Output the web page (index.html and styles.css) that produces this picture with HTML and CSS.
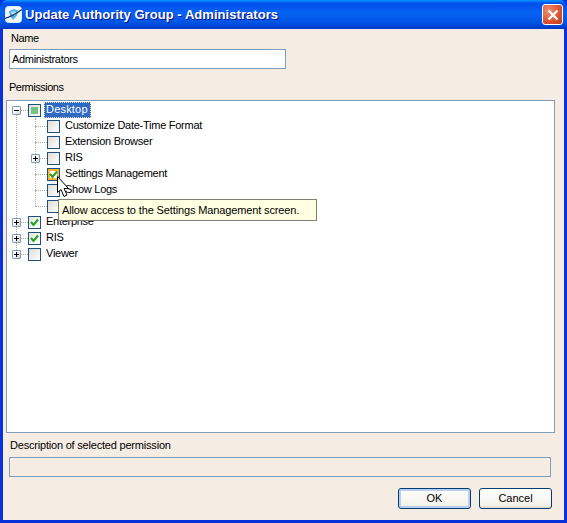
FILE: index.html
```html
<!DOCTYPE html>
<html lang="en">
<head>
    <meta charset="UTF-8">
    <title>Update Authority Group - Administrators</title>
    <link rel="stylesheet" href="styles.css">
</head>
<body>
    <div class="window">
        <div class="titlebar">
            <svg class="app-icon" width="17" height="17" viewBox="0 0 17 17">
                <rect x="0.5" y="0.5" width="16" height="16" rx="3" fill="#f4f8fc" stroke="#dfeaf6"/>
                <path d="M4 5l5-2 4 1.500-1 5-4 4.500-3-4z" fill="#4fb2ea"/>
                <path d="M6 6l3-1 2 1-1 3-2 1z" fill="#a6daf6"/>
                <path d="M0 12.500C5 11 11 8 17 3.500" fill="none" stroke="#1c3c5c" stroke-width="1.300"/>
            </svg>
            <span class="title-text">Update Authority Group - Administrators</span>
            <div class="close-btn">
                <svg width="12" height="12" viewBox="0 0 12 12">
                    <path d="M1.500 1.500l9 9M10.500 1.500l-9 9" stroke="#fff" stroke-width="2.400"/>
                </svg>
            </div>
        </div>

        <div class="client">
            <label class="name-label">Name</label>
            <input class="name-input" type="text" value="Administrators">

            <label class="perm-label">Permissions</label>
            <div class="tree">
                <ul class="tree-list top">
                    <li>
                        <div class="tree-row">
                            <span class="expander minus"></span>
                            <span class="check mixed"></span>
                            <span class="tree-label selected">Desktop</span>
                        </div>
                        <ul class="tree-list">
                            <li><div class="tree-row"><span class="expander none"></span><span class="check"></span><span class="tree-label">Customize Date-Time Format</span></div></li>
                            <li><div class="tree-row"><span class="expander none"></span><span class="check"></span><span class="tree-label">Extension Browser</span></div></li>
                            <li><div class="tree-row"><span class="expander plus"></span><span class="check"></span><span class="tree-label">RIS</span></div></li>
                            <li><div class="tree-row"><span class="expander none"></span><span class="check checked hot"><svg width="11" height="11" viewBox="0 0 11 11"><path d="M2 5l2.500 3L9 2.500" class="tick"/></svg></span><span class="tree-label">Settings Management</span></div></li>
                            <li><div class="tree-row"><span class="expander none"></span><span class="check"></span><span class="tree-label">Show Logs</span></div></li>
                            <li><div class="tree-row"><span class="expander none"></span><span class="check"></span><span class="tree-label"></span></div></li>
                        </ul>
                    </li>
                    <li><div class="tree-row"><span class="expander plus"></span><span class="check checked"><svg width="11" height="11" viewBox="0 0 11 11"><path d="M2 5l2.500 3L9 2.500" class="tick"/></svg></span><span class="tree-label">Enterprise</span></div></li>
                    <li><div class="tree-row"><span class="expander plus"></span><span class="check checked"><svg width="11" height="11" viewBox="0 0 11 11"><path d="M2 5l2.500 3L9 2.500" class="tick"/></svg></span><span class="tree-label">RIS</span></div></li>
                    <li><div class="tree-row"><span class="expander plus"></span><span class="check"></span><span class="tree-label">Viewer</span></div></li>
                </ul>
            </div>

            <label class="desc-label">Description of selected permission</label>
            <div class="desc-box"></div>

            <div class="buttons">
                <button class="btn default">OK</button>
                <button class="btn">Cancel</button>
            </div>
        </div>

        <div class="tooltip">Allow access to the Settings Management screen.</div>
        <svg class="cursor" width="16" height="24" viewBox="0 0 16 24">
            <path d="M1.500 1.500v16l3.500-3 3 7 3-1.500-3-6.500h4.500z" fill="#fff" stroke="#000"/>
        </svg>
    </div>
</body>
</html>
```

FILE: styles.css
```css
* {
    box-sizing: border-box;
}

body {
    margin: 0;
    font-family: "Liberation Sans", Arial, sans-serif;
    font-size: 11px;
    color: #000;
}

.window {
    position: relative;
    width: 567px;
    height: 523px;
    display: flex;
    flex-direction: column;
    background-color: #0831d9;
}

.titlebar {
    height: 29px;
    display: flex;
    align-items: center;
    padding: 0 4px 0 5px;
    border-radius: 7px 7px 0 0;
    background: linear-gradient(#0997ff 0, #0053ee 3px, #0050ee 5px, #0663f3 12px, #0055e5 22px, #0046d8 26px, #0036c0 29px);
}

.app-icon {
    flex-shrink: 0;
}

.title-text {
    margin-left: 3px;
    font-size: 13px;
    font-weight: bold;
    letter-spacing: 0.05px;
    color: #fff;
    text-shadow: 1px 1px 0 #0f1089;
}

.close-btn {
    margin-left: auto;
    width: 21px;
    height: 21px;
    display: flex;
    align-items: center;
    justify-content: center;
    border: 1px solid #fff;
    border-radius: 3px;
    background: radial-gradient(circle at 30% 30%, #f0906c, #dc5030 60%, #c03a18);
}

.client {
    flex: 1;
    display: flex;
    flex-direction: column;
    margin: 0 3px 3px;
    background-color: #f5ede4;
}

.name-label {
    margin: 3px 0 0 8px;
    height: 14px;
    line-height: 12px;
    letter-spacing: -0.4px;
}

.name-input {
    width: 277px;
    height: 20px;
    margin: 3px 0 0 6px;
    padding: 0 2px;
    border: 1px solid #7f9db9;
    font-family: inherit;
    font-size: 11px;
    letter-spacing: -0.33px;
    outline: none;
}

.perm-label {
    margin: 12px 0 0 6px;
    height: 14px;
    line-height: 12px;
    letter-spacing: -0.5px;
}

.tree {
    width: 549px;
    height: 333px;
    margin: 5px 0 0 3px;
    padding: 1px 0 0 5px;
    border: 1px solid #7f9db9;
    background-color: #fff;
}

.tree-list {
    position: relative;
    list-style: none;
    margin: 0 0 0 19px;
    padding: 0;
}

.tree-list.top {
    margin-left: 0;
}

/* vertical guide */
.tree-list::before {
    content: "";
    position: absolute;
    left: 4px;
    top: 0;
    bottom: 8px;
    border-left: 1px dotted #b0a898;
}

.tree-list.top::before {
    top: 8px;
}

.tree-row {
    position: relative;
    height: 16px;
    display: flex;
    align-items: center;
}

/* horizontal guide */
.tree-row::before {
    content: "";
    position: absolute;
    left: 4px;
    top: 8px;
    width: 12px;
    border-top: 1px dotted #b0a898;
}

.expander {
    position: relative;
    width: 9px;
    height: 9px;
    flex-shrink: 0;
    border: 1px solid #7b9ebd;
    border-radius: 1px;
    background: linear-gradient(135deg, #fff 40%, #d8d0c0);
}

.expander.none {
    visibility: hidden;
}

.expander::before {
    content: "";
    position: absolute;
    left: 1px;
    top: 3px;
    width: 5px;
    height: 1px;
    background-color: #000;
}

.expander.plus::after {
    content: "";
    position: absolute;
    left: 3px;
    top: 1px;
    width: 1px;
    height: 5px;
    background-color: #000;
}

.check {
    position: relative;
    width: 13px;
    height: 13px;
    flex-shrink: 0;
    margin-left: 7px;
    display: flex;
    align-items: center;
    justify-content: center;
    border: 1px solid #1c5180;
    background: linear-gradient(135deg, #dcdcd7, #fff);
}

.check.mixed::before {
    content: "";
    width: 7px;
    height: 7px;
    background-color: #73c47c;
}

.check.checked {
    background: linear-gradient(135deg, #e4e4de, #fff);
}

.check.hot {
    background: #fff;
    box-shadow: inset 0 0 0 2px #f8b636;
}

.tick {
    fill: none;
    stroke: #21a121;
    stroke-width: 2;
}

.tree-label {
    height: 16px;
    line-height: 13px;
    margin-left: 4px;
    border: 1px solid transparent;
    letter-spacing: -0.26px;
    white-space: nowrap;
}

.tree-label.selected {
    margin-left: 3px;
    padding: 0 2px 0 1px;
    background-color: #316ac5;
    color: #fff;
    letter-spacing: 0.2px;
    border: 1px dotted #e8e0a0;
}

.desc-label {
    margin: 6px 0 0 7px;
    height: 14px;
    line-height: 12px;
    letter-spacing: -0.2px;
}

.desc-box {
    width: 542px;
    height: 20px;
    margin: 4px 0 0 6px;
    border: 1px solid #7f9db9;
}

.buttons {
    display: flex;
    justify-content: flex-end;
    gap: 8px;
    margin: 11px 12px 0 0;
}

.btn {
    width: 73px;
    height: 21px;
    padding: 0 0 2px;
    border: 1px solid #003c74;
    border-radius: 3px;
    background: linear-gradient(#fff, #f4f2ea 85%, #dcd8cc);
    font-family: inherit;
    font-size: 11px;
    color: #000;
}

.btn.default {
    box-shadow: inset 0 0 0 2px #b8d0f0;
}

.tooltip {
    position: absolute;
    left: 58px;
    top: 199px;
    width: 259px;
    height: 22px;
    line-height: 20px;
    padding-left: 3px;
    border: 1px solid #808070;
    background-color: #ffffe1;
    letter-spacing: -0.13px;
    white-space: nowrap;
}

.cursor {
    position: absolute;
    left: 56px;
    top: 175px;
}
```
